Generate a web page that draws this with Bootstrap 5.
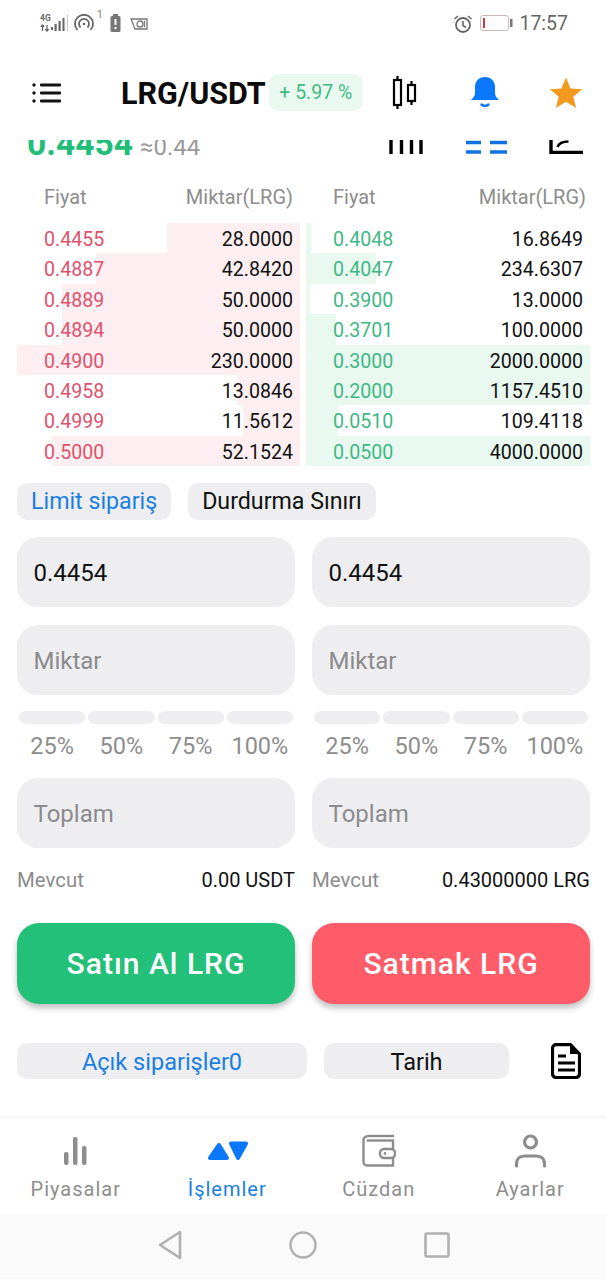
<!doctype html>
<html lang="tr">
<head>
<meta charset="utf-8">
<meta name="viewport" content="width=device-width, initial-scale=1">
<link href="https://cdn.jsdelivr.net/npm/bootstrap@5.3.0/dist/css/bootstrap.min.css" rel="stylesheet">
<style>
html,body{height:1280px;overflow:hidden}
body{font-family:Roboto,"Liberation Sans",sans-serif;color:#111;background:#fff;width:606px}
.status-row{height:47px;padding:10px 38px 0 40px;color:#777}
.net-col{width:10px;margin-top:4px}
.net-txt{display:block;font-size:8.5px;line-height:8px;font-weight:700;color:#666}
.clock-txt{font-size:19.500px;line-height:24px;color:#666;margin-left:6px;margin-top:2px}
.head-row{height:93px;padding:0 23px 0 32px}
.pair-title{font-size:30.500px;font-weight:700;line-height:36px;color:#0b0b0b;margin-left:59px;margin-top:1px}
.pair-chg{background:#e9f9f0;color:#3dbb83;font-size:19.500px;height:37px;line-height:37px;width:94px;text-align:center;border-radius:9px;margin-left:3px;margin-bottom:2px}
.head-ico{margin-bottom:2px;flex:none}
.price-clip{height:20px;overflow:hidden;padding-left:27px}
.price-inner{margin-top:-6.400px;line-height:20px;height:20px}
.price-big{font-size:33.600px;font-weight:700;color:#22bd78;line-height:20px}
.price-fiat{font-size:23.900px;color:#999;line-height:20px;margin-left:7px}
.clip-icons{height:20px;gap:42.500px;padding-right:23px}
.depth-wrap{display:grid;grid-template-columns:283px 284px;column-gap:6px;padding:0 16px 0 17px;margin-top:18px}
.depth-head{height:45px;padding:5px 7px 0 27px;color:#8d8d8d;font-size:20px;line-height:28px}
.depth-head-r{padding-right:4px}
.depth-line{height:30.400px;line-height:30.400px;font-size:19.600px;padding:2px 7px 0 27px;position:relative}
.depth-line>span{position:relative}
.depth-bar{position:absolute;top:0;bottom:0;right:0}
.bar-sell{background:#fdeff1}
.bar-buy{background:#e9f9f0;right:auto;left:0}
.p-sell{color:#e0526b}
.p-buy{color:#3fb886}
.kind-row{padding:17px 17px 0;gap:17px}
.kind-pill{height:37px;line-height:37px;border-radius:10px;background:#eeeef0;font-size:23.200px;padding:0 14px;color:#111;border:0}
.kind-on{color:#1a7fe3}
.form-cols{display:grid;grid-template-columns:278px 278px;column-gap:17px;padding:0 16px 0 17px;margin-top:17px}
.fld{height:70px;border:0;border-radius:21px;background:#eeeef0;font-size:24px;padding:2px 16.500px 0;color:#111;margin-bottom:18px;box-shadow:none}
.fld::placeholder{color:#8b8b8d;opacity:1}
.fld-sum{margin-bottom:0}
.seg-row{gap:3px;padding:0 2px;margin-top:-2px}
.seg-bar{height:13px;background:#eeeef0;border-radius:7px;flex:1}
.pct-row{font-size:23.500px;color:#8d8d8d;line-height:28px;margin:8px 0 18px;padding:0 2px;gap:3px;text-align:center}
.pct-row>span{flex:1 1 0;white-space:nowrap}
.avail-row{font-size:20px;line-height:24px;margin-top:20px;color:#111}
.avail-lbl{color:#8b8b8d;font-size:20.400px}
.trade-btn{height:81px;width:100%;margin-top:31px;border:0;border-radius:22px;color:#fff;font-size:30px;font-weight:500;letter-spacing:1px;box-shadow:0 4px 6px rgba(0,0,0,.25)}
.btn-buy,.btn-buy:hover{background:#22c078;color:#fff}
.btn-sell,.btn-sell:hover{background:#fd5c68;color:#fff}
.tabs-row{padding:0 25px 0 17px;margin-top:38px;height:37px}
.tab-pill{height:36px;line-height:38px;border-radius:10px;background:#eeeef0;text-align:center;font-size:23.500px}
.tab-a{width:290px;color:#1a7fe3}
.tab-b{width:185px;margin-left:17px;color:#111}
.bottom-nav{height:98px;margin-top:37px;border-top:2px solid #f5f5f5;padding-top:16px}
.nav-cell{width:151.500px;text-align:center;font-size:20px;letter-spacing:1px;color:#8d8d8d;line-height:24px}
.nav-cell svg{display:block;margin:0 auto 9px}
.nav-on{color:#1a7fe3}
.os-bar{height:65px;background:#fafafa;padding:0 0 3px 2px;gap:107px}
</style>
</head>
<body>
<div class="status-row d-flex align-items-start">
  <div class="net-col"><span class="net-txt">4G</span>
    <svg width="10" height="8" viewBox="0 0 10 8" class="d-block" style="margin-top:2px"><path d="M2.500 7V1M.8 2.800L2.500 1l1.700 1.800M7 1v6M5.300 5.200L7 7l1.700-1.800" fill="none" stroke="#666" stroke-width="1.300"/></svg>
  </div>
  <svg width="18" height="18" viewBox="0 0 18 18" class="mt-1 flex-none"><g fill="#666"><rect x="1" y="13" width="2" height="3"/><rect x="4.500" y="10" width="2.200" height="7"/><rect x="8.500" y="7" width="2.200" height="10"/></g><rect x="12.500" y="4" width="2" height="13" fill="#666"/><rect x="16.800" y="1" width="1.200" height="16" fill="#ccc"/></svg>
  <svg width="20" height="18" viewBox="0 0 20 18" class="mt-1" style="margin-left:6px"><g fill="none" stroke="#666" stroke-width="1.800"><path d="M3.500 16a9 9 0 1 1 13 0"/><path d="M6.500 13.500a5 5 0 1 1 7 0"/></g><circle cx="10" cy="10" r="1.300" fill="#666"/></svg>
  <span style="font-size:10px;line-height:10px;color:#777;margin:0 0 0 3px">1</span>
  <svg width="11" height="18" viewBox="0 0 11 18" class="mt-1" style="margin-left:7px"><rect x="3" y="0" width="5" height="2" fill="#777"/><rect x="0.500" y="2" width="10" height="16" rx="1.500" fill="#777"/><rect x="4.500" y="5" width="2" height="6" fill="#fff"/><rect x="4.500" y="13" width="2" height="2" fill="#fff"/></svg>
  <svg width="18" height="14" viewBox="0 0 18 14" style="margin:7px 0 0 9px"><g fill="none" stroke="#777" stroke-width="1.300"><path d="M1 2h16v10H5z"/><circle cx="10" cy="7" r="3"/><path d="M14.500 4v6"/></g></svg>
  <span class="flex-grow-1"></span>
  <svg width="20" height="20" viewBox="0 0 20 20" class="mt-1"><circle cx="10" cy="11" r="7" fill="none" stroke="#666" stroke-width="1.800"/><path d="M10 7v4.500l3 2" fill="none" stroke="#666" stroke-width="1.600"/><path d="M1.500 5l3.500-3M18.500 5l-3.500-3" stroke="#666" stroke-width="1.600"/></svg>
  <svg width="33" height="18" viewBox="0 0 33 18" class="mt-1" style="margin-left:7px"><rect x=".5" y="1.500" width="28" height="15" rx="2.500" fill="none" stroke="#ccb6b6"/><rect x="3" y="4" width="2" height="10" fill="#d13a3a"/><rect x="30" y="5" width="2.500" height="8" fill="#777"/></svg>
  <span class="clock-txt">17:57</span>
</div>

<div class="head-row d-flex align-items-center">
  <svg width="30" height="20" viewBox="0 0 30 20" class="head-ico"><g fill="#111"><circle cx="2" cy="2" r="1.700"/><circle cx="2" cy="10" r="1.700"/><circle cx="2" cy="18" r="1.700"/><rect x="8" y=".6" width="21" height="2.800" rx="1"/><rect x="8" y="8.600" width="21" height="2.800" rx="1"/><rect x="8" y="16.600" width="21" height="2.800" rx="1"/></g></svg>
  <span class="pair-title">LRG/USDT</span>
  <span class="pair-chg">+ 5.97 %</span>
  <span class="flex-grow-1"></span>
  <svg width="26" height="33" viewBox="0 0 26 33" class="head-ico" style="margin-right:54px"><g fill="none" stroke="#000" stroke-width="2.200"><rect x="3" y="4" width="7" height="25"/><rect x="17" y="9" width="7" height="16"/></g><path d="M6.500 0v4M6.500 29v4M20.500 5v4M20.500 25v4" stroke="#000" stroke-width="2.200"/></svg>
  <svg width="28" height="31" viewBox="0 0 28 31" class="head-ico" style="margin-right:50px"><path d="M14 0c6.500 0 10 4.500 10 10v6c0 3 2 5 4 7H0c2-2 4-4 4-7v-6C4 4.500 7.500 0 14 0z" fill="#0b78fa"/><path d="M10.500 27.500c2 1.700 5 1.700 7 0" fill="none" stroke="#0b78fa" stroke-width="2.500" stroke-linecap="round"/></svg>
  <svg width="34" height="31" viewBox="0 0 34 32" class="head-ico"><path d="M17 .5l4.700 11.300 12 .9-9.200 7.800 3 11.500L17 25.500l-10.500 6.500 3-11.500L.3 12.700l12-.9z" fill="#f29a20"/></svg>
</div>

<div class="price-clip d-flex">
  <div class="price-inner d-flex align-items-baseline"><span class="price-big">0.4454</span><span class="price-fiat">≈0.44</span></div>
  <span class="flex-grow-1"></span>
  <div class="clip-icons d-flex align-items-start">
    <svg width="34" height="14" viewBox="0 0 34 14"><path d="M2 0v14M12.500 0v14M22.500 0v14M32 0v14" stroke="#000" stroke-width="3.400"/></svg>
    <svg width="41" height="14" viewBox="0 0 41 14"><path d="M0 2.500h15M24 2.500h17M0 12h15M24 12h17" stroke="#1272e0" stroke-width="3.400"/></svg>
    <svg width="34" height="14" viewBox="0 0 34 14"><path d="M2 0v12.500h32" fill="none" stroke="#000" stroke-width="3.400"/><path d="M8.500 7c1-3 3-5.500 11-5.500" fill="none" stroke="#000" stroke-width="2.400"/></svg>
  </div>
</div>

<div class="depth-wrap">
  <div>
    <div class="depth-head d-flex justify-content-between"><span>Fiyat</span><span>Miktar(LRG)</span></div>
    <div class="depth-line d-flex justify-content-between"><i class="depth-bar bar-sell" style="width:133px"></i><span class="p-sell">0.4455</span><span>28.0000</span></div>
    <div class="depth-line d-flex justify-content-between"><i class="depth-bar bar-sell" style="width:204px"></i><span class="p-sell">0.4887</span><span>42.8420</span></div>
    <div class="depth-line d-flex justify-content-between"><i class="depth-bar bar-sell" style="width:238px"></i><span class="p-sell">0.4889</span><span>50.0000</span></div>
    <div class="depth-line d-flex justify-content-between"><i class="depth-bar bar-sell" style="width:238px"></i><span class="p-sell">0.4894</span><span>50.0000</span></div>
    <div class="depth-line d-flex justify-content-between"><i class="depth-bar bar-sell" style="width:283px"></i><span class="p-sell">0.4900</span><span>230.0000</span></div>
    <div class="depth-line d-flex justify-content-between"><i class="depth-bar bar-sell" style="width:63px"></i><span class="p-sell">0.4958</span><span>13.0846</span></div>
    <div class="depth-line d-flex justify-content-between"><i class="depth-bar bar-sell" style="width:57px"></i><span class="p-sell">0.4999</span><span>11.5612</span></div>
    <div class="depth-line d-flex justify-content-between"><i class="depth-bar bar-sell" style="width:248px"></i><span class="p-sell">0.5000</span><span>52.1524</span></div>
  </div>
  <div>
    <div class="depth-head depth-head-r d-flex justify-content-between"><span>Fiyat</span><span>Miktar(LRG)</span></div>
    <div class="depth-line d-flex justify-content-between"><i class="depth-bar bar-buy" style="width:5px"></i><span class="p-buy">0.4048</span><span>16.8649</span></div>
    <div class="depth-line d-flex justify-content-between"><i class="depth-bar bar-buy" style="width:70px"></i><span class="p-buy">0.4047</span><span>234.6307</span></div>
    <div class="depth-line d-flex justify-content-between"><i class="depth-bar bar-buy" style="width:4px"></i><span class="p-buy">0.3900</span><span>13.0000</span></div>
    <div class="depth-line d-flex justify-content-between"><i class="depth-bar bar-buy" style="width:30px"></i><span class="p-buy">0.3701</span><span>100.0000</span></div>
    <div class="depth-line d-flex justify-content-between"><i class="depth-bar bar-buy" style="width:284px"></i><span class="p-buy">0.3000</span><span>2000.0000</span></div>
    <div class="depth-line d-flex justify-content-between"><i class="depth-bar bar-buy" style="width:284px"></i><span class="p-buy">0.2000</span><span>1157.4510</span></div>
    <div class="depth-line d-flex justify-content-between"><i class="depth-bar bar-buy" style="width:32px"></i><span class="p-buy">0.0510</span><span>109.4118</span></div>
    <div class="depth-line d-flex justify-content-between"><i class="depth-bar bar-buy" style="width:284px"></i><span class="p-buy">0.0500</span><span>4000.0000</span></div>
  </div>
</div>

<div class="kind-row d-flex">
  <button type="button" class="kind-pill kind-on">Limit sipariş</button>
  <button type="button" class="kind-pill">Durdurma Sınırı</button>
</div>

<div class="form-cols">
  <div>
    <input class="form-control fld" value="0.4454">
    <input class="form-control fld" placeholder="Miktar">
    <div class="seg-row d-flex"><i class="seg-bar"></i><i class="seg-bar"></i><i class="seg-bar"></i><i class="seg-bar"></i></div>
    <div class="pct-row d-flex"><span>25%</span><span>50%</span><span>75%</span><span>100%</span></div>
    <input class="form-control fld fld-sum" placeholder="Toplam">
    <div class="avail-row d-flex justify-content-between align-items-baseline"><span class="avail-lbl">Mevcut</span><span>0.00 USDT</span></div>
    <button type="button" class="btn trade-btn btn-buy">Satın Al LRG</button>
  </div>
  <div>
    <input class="form-control fld" value="0.4454">
    <input class="form-control fld" placeholder="Miktar">
    <div class="seg-row d-flex"><i class="seg-bar"></i><i class="seg-bar"></i><i class="seg-bar"></i><i class="seg-bar"></i></div>
    <div class="pct-row d-flex"><span>25%</span><span>50%</span><span>75%</span><span>100%</span></div>
    <input class="form-control fld fld-sum" placeholder="Toplam">
    <div class="avail-row d-flex justify-content-between align-items-baseline"><span class="avail-lbl">Mevcut</span><span>0.43000000 LRG</span></div>
    <button type="button" class="btn trade-btn btn-sell">Satmak LRG</button>
  </div>
</div>

<div class="tabs-row d-flex align-items-center">
  <div class="tab-pill tab-a">Açık siparişler0</div>
  <div class="tab-pill tab-b">Tarih</div>
  <span class="flex-grow-1"></span>
  <svg width="30" height="36" viewBox="0 0 30 36"><path d="M5 1.700h14.500l9 9.500v20a3.500 3.500 0 0 1-3.500 3.300H5a3.500 3.500 0 0 1-3.500-3.300V5A3.500 3.500 0 0 1 5 1.700z" fill="none" stroke="#000" stroke-width="3.200" stroke-linejoin="round"/><path d="M19 2v9h9z" fill="#000"/><path d="M7 13h8M7 20h17M7 27h17" stroke="#000" stroke-width="2.800"/></svg>
</div>

<div class="bottom-nav d-flex">
  <div class="nav-cell"><svg width="26" height="34" viewBox="0 0 26 34"><g fill="#8d8d8d"><rect x="1" y="18" width="4.500" height="13" rx="2"/><rect x="10" y="3" width="4.500" height="28" rx="2"/><rect x="19" y="12" width="4.500" height="19" rx="2"/></g></svg>Piyasalar</div>
  <div class="nav-cell nav-on"><svg width="42" height="34" viewBox="0 0 42 34"><g fill="#0b78fa" stroke="#0b78fa" stroke-width="4" stroke-linejoin="round"><path d="M13 11L4 24h17z"/><path d="M25 9.500h15L32 24z"/></g></svg>İşlemler</div>
  <div class="nav-cell"><svg width="34" height="34" viewBox="0 0 34 34"><g fill="none" stroke="#8d8d8d" stroke-width="2.400"><path d="M5 2h27"/><path d="M32 6.500H5"/><path d="M5 2.500a3.500 3.500 0 0 0-3.500 3.500v22a3.500 3.500 0 0 0 3.500 3.500h26v-8M31 7v8"/><rect x="18" y="15" width="15" height="9" rx="4" fill="#fff"/></g><circle cx="23" cy="19.500" r="1.400" fill="#8d8d8d"/></svg>Cüzdan</div>
  <div class="nav-cell"><svg width="32" height="34" viewBox="0 0 32 34"><g fill="none" stroke="#8d8d8d" stroke-width="3.200"><circle cx="16.500" cy="8" r="6"/><path d="M2.500 32v-2c0-5 3-8 8-8h12c5 0 8 3 8 8v2" stroke-linecap="round"/></g></svg>Ayarlar</div>
</div>

<div class="os-bar d-flex align-items-center justify-content-center">
  <svg width="24" height="30" viewBox="0 0 24 30"><path d="M22 2v26L2 15z" fill="none" stroke="#b0b0b0" stroke-width="2.600" stroke-linejoin="round"/></svg>
  <svg width="28" height="28" viewBox="0 0 28 28"><circle cx="14" cy="14" r="12.500" fill="none" stroke="#b0b0b0" stroke-width="2.400"/></svg>
  <svg width="26" height="26" viewBox="0 0 26 26"><rect x="1.500" y="1.500" width="23" height="23" rx="1.500" fill="none" stroke="#b0b0b0" stroke-width="2.600"/></svg>
</div>
<script src="https://cdn.jsdelivr.net/npm/bootstrap@5.3.0/dist/js/bootstrap.bundle.min.js"></script>
</body>
</html>
